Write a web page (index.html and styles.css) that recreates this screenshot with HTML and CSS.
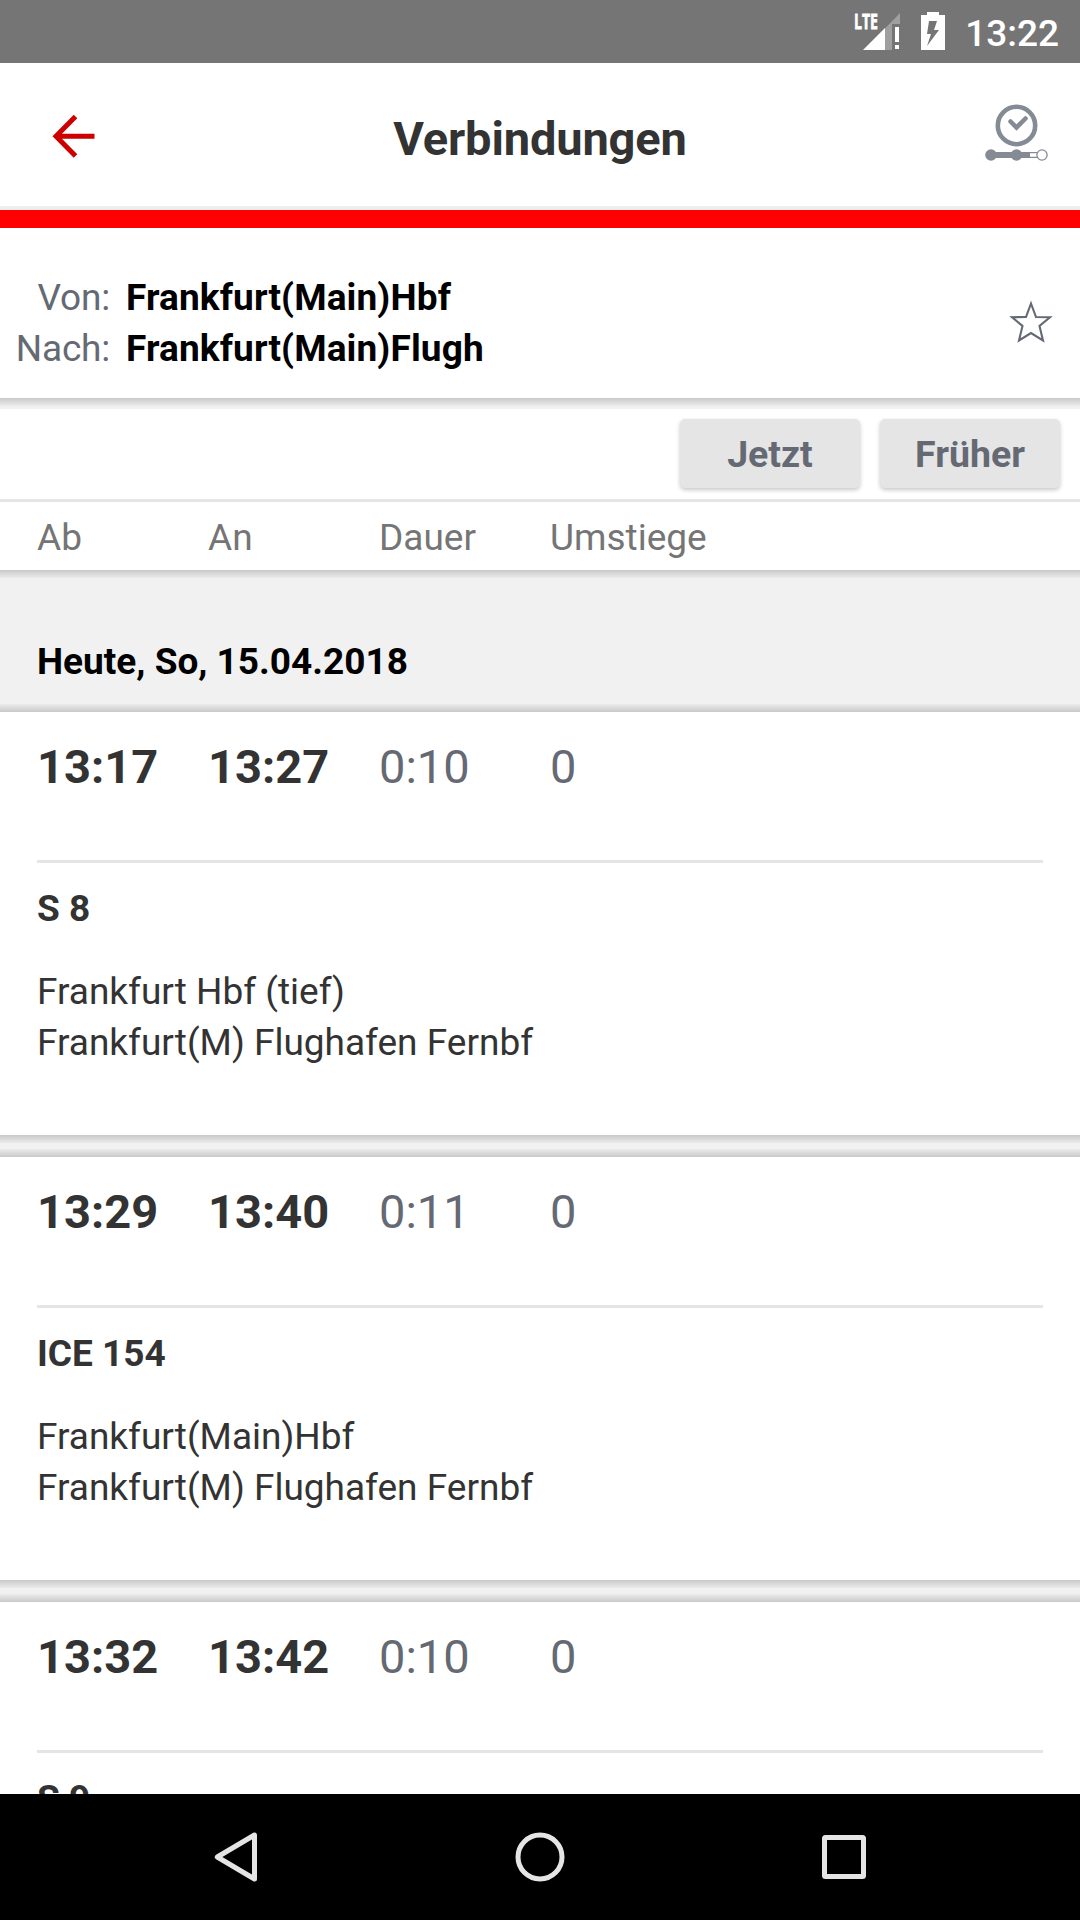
FILE: index.html
```html
<!DOCTYPE html>
<html lang="de">
<head>
<meta charset="utf-8">
<title>Verbindungen</title>
<link rel="stylesheet" href="styles.css">
</head>
<body>
<div class="screen">
  <div class="status-bar">
    <svg class="signal" width="48" height="40" viewBox="-1 0 48 40">
      <path d="M46 1V12H38V38H10Z" fill="#9f9f9f"/>
      <path d="M31 16V38H9Z" fill="#fff"/>
      <path d="M41 15h4v15h-4zM41 33h4v4h-4z" fill="#fff"/>
      <text class="lte" x="0" y="17" textLength="24" lengthAdjust="spacingAndGlyphs">LTE</text>
    </svg>
    <svg class="battery" width="24" height="38" viewBox="0 0 24 38">
      <path d="M6 0H18V3H24V38H0V3H6Z" fill="#fff"/>
      <path d="M8 9H16L13 18H18L6 34L10 22H6Z" fill="#757575"/>
    </svg>
    <span class="clock">13:22</span>
  </div>

  <header class="app-bar">
    <svg class="back" width="44" height="44" viewBox="0 0 44 44" fill="none" stroke="#c00" stroke-width="5">
      <path d="M23.500 2.500L4 22.300L23.500 42M4 22.300H42.500"/>
    </svg>
    <h1 class="title">Verbindungen</h1>
    <svg class="timetable" width="64" height="58" viewBox="0 0 64 58">
      <circle cx="31.500" cy="21.500" r="18.700" fill="none" stroke="#848b94" stroke-width="4.600"/>
      <path d="M25.500 17.500L31.500 23.500L40.500 14.500" fill="none" stroke="#848b94" stroke-width="4.500" stroke-linecap="round"/>
      <path d="M6 48H45V54H6Z" fill="#848b94"/>
      <circle cx="6" cy="51" r="5.800" fill="#848b94"/>
      <circle cx="31.500" cy="51" r="5.800" fill="#848b94"/>
      <path d="M45 48.700H53M45 53.300H53" stroke="#848b94" stroke-width="1.300"/>
      <circle cx="57" cy="51" r="5.100" fill="#fff" stroke="#848b94" stroke-width="1.300"/>
    </svg>
  </header>

  <section class="route">
    <div class="route-grid">
      <span class="label">Von:</span><span class="station">Frankfurt(Main)Hbf</span>
      <span class="label">Nach:</span><span class="station">Frankfurt(Main)Flugh</span>
    </div>
    <svg class="star" width="44" height="44" viewBox="0 0 44 44">
      <path d="M22 3.500L27 17L41 17.200L30.500 26L34 40.500L22 33L10 40.500L13.500 26L3 17.200L17 17Z" fill="none" stroke="#646973" stroke-width="2.100"/>
    </svg>
  </section>
  <div class="shade-below"></div>

  <div class="actions">
    <button class="btn">Jetzt</button>
    <button class="btn">Früher</button>
  </div>
  <div class="columns head">
    <span>Ab</span><span>An</span><span>Dauer</span><span>Umstiege</span>
  </div>
  <div class="day">Heute, So, 15.04.2018</div>

  <main class="list">
    <article class="card">
      <div class="columns times"><b>13:17</b><b>13:27</b><span>0:10</span><span>0</span></div>
      <div class="train">S 8</div>
      <div class="stops"><div>Frankfurt Hbf (tief)</div><div>Frankfurt(M) Flughafen Fernbf</div></div>
    </article>
    <div class="gap"></div>
    <article class="card">
      <div class="columns times"><b>13:29</b><b>13:40</b><span>0:11</span><span>0</span></div>
      <div class="train">ICE 154</div>
      <div class="stops"><div>Frankfurt(Main)Hbf</div><div>Frankfurt(M) Flughafen Fernbf</div></div>
    </article>
    <div class="gap"></div>
    <article class="card">
      <div class="columns times"><b>13:32</b><b>13:42</b><span>0:10</span><span>0</span></div>
      <div class="train">S 9</div>
    </article>
  </main>

  <nav class="nav-bar">
    <svg width="50" height="50" viewBox="0 0 50 50"><path d="M43.500 3V47L6.300 25Z"/></svg>
    <svg width="50" height="50" viewBox="0 0 50 50"><circle cx="25" cy="25" r="22"/></svg>
    <svg width="50" height="50" viewBox="0 0 50 50"><rect x="5.500" y="5.500" width="39" height="39" rx="1"/></svg>
  </nav>
</div>
</body>
</html>
```
FILE: styles.css
```css
* {
  box-sizing: border-box;
}

body {
  margin: 0;
  background: #fff;
  font-family: Roboto, "Liberation Sans", sans-serif;
  font-size: 37px;
  line-height: 51px;
  color: #333;
}

svg {
  display: block;
  flex: none;
}

.screen {
  display: flex;
  flex-direction: column;
  width: 1080px;
  height: 1920px;
  overflow: hidden;
}

.screen > * {
  flex: none;
}

/* system status bar */
.status-bar {
  display: flex;
  justify-content: flex-end;
  align-items: flex-start;
  height: 63px;
  padding: 12px 21px 0 0;
  background: #757575;
  color: #fff;
}

.lte {
  font: 700 22px "Open Sans", Roboto, sans-serif;
  fill: #fff;
  stroke: #fff;
  stroke-width: 0.8px;
}

.battery {
  margin: 0 20px 0 20px;
}

.clock {
  font-weight: 500;
  line-height: 43px;
}

/* app bar */
.app-bar {
  display: grid;
  grid-template-columns: 64px 1fr 64px;
  align-items: start;
  height: 165px;
  padding: 41px 31px 0 52px;
  border-bottom: 18px solid #f00;
  box-shadow: inset 0 -4px #eee;
}

.back {
  margin-top: 10px;
}

.title {
  margin: 5px 21px 0 0;
  font-size: 47px;
  font-weight: 700;
  letter-spacing: -0.15px;
  line-height: 60px;
  text-align: center;
}

/* selected route */
.route {
  display: flex;
  justify-content: space-between;
  height: 170px;
  padding: 44px 27px 0 0;
}

.route-grid {
  display: grid;
  grid-template-columns: 110px auto;
  column-gap: 16px;
  align-content: start;
}

.label {
  text-align: right;
  letter-spacing: -0.2px;
  color: #646973;
}

.station {
  font-weight: 700;
  letter-spacing: 0.12px;
  color: #000;
}

.star {
  margin-top: 28px;
}

.shade-below {
  height: 11px;
  background: linear-gradient(#c9c9c9, #ebebeb 8px, #f1f1f1 8px);
}

.actions {
  display: flex;
  justify-content: flex-end;
  gap: 20px;
  height: 93px;
  padding: 10px 20px 0 0;
  border-bottom: 3px solid #e5e5e5;
}

.btn {
  width: 180px;
  height: 69px;
  padding: 2px 0 0;
  border: 0;
  border-radius: 5px;
  background: #e5e5e5;
  box-shadow: 0 2px 4px rgba(0, 0, 0, 0.22);
  color: #646973;
  font: 700 37.5px/67px Roboto, sans-serif;
}

/* connection table */
.columns {
  display: grid;
  grid-template-columns: 171px 171px 171px auto;
}

.head {
  height: 68px;
  padding: 10px 37px 0;
  color: #757575;
}

.day {
  height: 142px;
  padding: 66px 37px 0;
  background:
    linear-gradient(#c9c9c9, #ebebeb) top / 100% 8px no-repeat,
    linear-gradient(#ebebeb, #c9c9c9) bottom / 100% 8px no-repeat,
    #f1f1f1;
  color: #000;
  font-weight: 700;
}

.list {
  height: 1082px;
  overflow: hidden;
}

.card {
  height: 423px;
  padding: 0 37px;
}

.times {
  height: 151px;
  padding-top: 25px;
  border-bottom: 3px solid #e5e5e5;
  font-size: 47px;
  line-height: 60px;
}

.times span {
  color: #646973;
}

.train {
  padding-top: 20px;
  font-weight: 700;
}

.stops {
  padding-top: 32px;
}

.gap {
  height: 22px;
  background: linear-gradient(#c9c9c9, #ebebeb 8px, #f1f1f1 8px, #f1f1f1 14px, #ebebeb 14px, #c9c9c9);
}

/* system navigation */
.nav-bar {
  display: flex;
  justify-content: center;
  align-items: center;
  gap: 254px;
  height: 126px;
  background: #000;
}

.nav-bar svg {
  fill: none;
  stroke: #e5e5e5;
  stroke-width: 5px;
  stroke-linejoin: round;
}
```
